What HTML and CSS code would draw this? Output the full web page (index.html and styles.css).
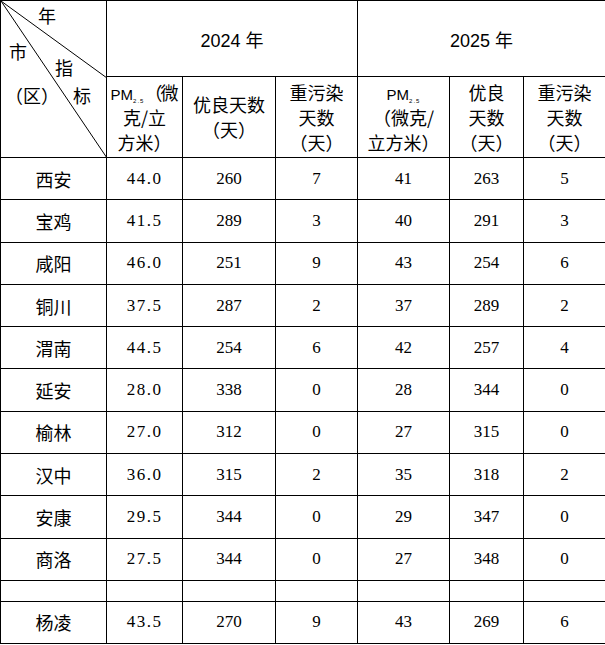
FILE: index.html
```html
<!DOCTYPE html>
<html lang="zh-CN">
<head>
<meta charset="utf-8">
<link rel="stylesheet" href="styles.css">
</head>
<body>
<table class="aq">
  <colgroup>
    <col class="c0"><col class="c1"><col class="c2"><col class="c3"><col class="c4"><col class="c5"><col class="c6">
  </colgroup>
  <thead>
    <tr class="h1">
      <td class="diag" rowspan="2">
        <svg class="diag-lines" width="106" height="157" viewBox="0 0 106 157">
          <line x1="0" y1="0" x2="106" y2="77" stroke="#000" stroke-width="1"/>
          <line x1="0" y1="0" x2="106" y2="157" stroke="#000" stroke-width="1"/>
        </svg>
        <span class="lbl l-year">年</span>
        <span class="lbl l-city">市</span>
        <span class="lbl l-zhi">指</span>
        <span class="lbl l-qu">（区）</span>
        <span class="lbl l-biao">标</span>
      </td>
      <th colspan="3" class="year">2024 年</th>
      <th colspan="3" class="year">2025 年</th>
    </tr>
    <tr class="h2">
      <th class="sub pmh"><span class="pmt">PM</span><span class="sb">2.5</span><span class="par">（</span>微<br>克/立<br>方米）</th>
      <th class="sub">优良天数<br>（天）</th>
      <th class="sub">重污染<br>天数<br>（天）</th>
      <th class="sub"><span class="pmt">PM</span><span class="sb">2.5</span><br>（微克/<br>立方米）</th>
      <th class="sub">优良<br>天数<br>（天）</th>
      <th class="sub">重污染<br>天数<br>（天）</th>
    </tr>
  </thead>
  <tbody>
    <tr class="row"><td class="city">西安</td><td class="pm">44.0</td><td>260</td><td>7</td><td>41</td><td>263</td><td>5</td></tr>
    <tr class="row"><td class="city">宝鸡</td><td class="pm">41.5</td><td>289</td><td>3</td><td>40</td><td>291</td><td>3</td></tr>
    <tr class="row"><td class="city">咸阳</td><td class="pm">46.0</td><td>251</td><td>9</td><td>43</td><td>254</td><td>6</td></tr>
    <tr class="row"><td class="city">铜川</td><td class="pm">37.5</td><td>287</td><td>2</td><td>37</td><td>289</td><td>2</td></tr>
    <tr class="row"><td class="city">渭南</td><td class="pm">44.5</td><td>254</td><td>6</td><td>42</td><td>257</td><td>4</td></tr>
    <tr class="row"><td class="city">延安</td><td class="pm">28.0</td><td>338</td><td>0</td><td>28</td><td>344</td><td>0</td></tr>
    <tr class="row"><td class="city">榆林</td><td class="pm">27.0</td><td>312</td><td>0</td><td>27</td><td>315</td><td>0</td></tr>
    <tr class="row"><td class="city">汉中</td><td class="pm">36.0</td><td>315</td><td>2</td><td>35</td><td>318</td><td>2</td></tr>
    <tr class="row"><td class="city">安康</td><td class="pm">29.5</td><td>344</td><td>0</td><td>29</td><td>347</td><td>0</td></tr>
    <tr class="row"><td class="city">商洛</td><td class="pm">27.5</td><td>344</td><td>0</td><td>27</td><td>348</td><td>0</td></tr>
    <tr class="blank"><td></td><td></td><td></td><td></td><td></td><td></td><td></td></tr>
    <tr class="row last"><td class="city">杨凌</td><td class="pm">43.5</td><td>270</td><td>9</td><td>43</td><td>269</td><td>6</td></tr>
  </tbody>
</table>
</body>
</html>
```

FILE: styles.css
```css
html, body {
  margin: 0;
  padding: 0;
  background: #fff;
}

.aq {
  border-collapse: collapse;
  table-layout: fixed;
  width: 605px;
  color: #000;
  font-family: "Liberation Serif", "Noto Sans CJK SC", serif;
  font-size: 17px;
}

.c0 { width: 106px; }
.c1 { width: 76px; }
.c2 { width: 93px; }
.c3 { width: 82px; }
.c4 { width: 92px; }
.c5 { width: 74px; }
.c6 { width: 82px; }

.aq td,
.aq th {
  border: 1px solid #000;
  padding: 0;
  text-align: center;
  vertical-align: middle;
  font-weight: normal;
}

.h1 { height: 76px; }
.h2 { height: 81px; }
.row { height: 42.3px; }
.blank { height: 21px; }
.last { height: 42px; }

.year {
  font-family: "Liberation Sans", "Noto Sans CJK SC", sans-serif;
  font-size: 18px;
}

.sub {
  font-family: "Noto Sans CJK SC", sans-serif;
  font-size: 18px;
  line-height: 25px;
  white-space: nowrap;
}

.pmt {
  font-family: "Liberation Sans", sans-serif;
  font-size: 15px;
  line-height: 0;
}

.sb {
  font-family: "Liberation Sans", sans-serif;
  font-size: 6px;
  letter-spacing: 1px;
  vertical-align: -3px;
  line-height: 0;
}

.pmh {
  text-align: left;
  padding-left: 6px;
}

.par {
  letter-spacing: -2px;
}

.city {
  font-family: "Noto Sans CJK SC", sans-serif;
  font-size: 18px;
}

.pm {
  letter-spacing: 1.5px;
}

.diag {
  position: relative;
  overflow: hidden;
}

.diag-lines {
  position: absolute;
  left: 0;
  top: 0;
  display: block;
}

.lbl {
  position: absolute;
  font-family: "Noto Sans CJK SC", sans-serif;
  font-size: 18px;
  line-height: 18px;
  white-space: nowrap;
}

.l-year { left: 37px; top: 5px; }
.l-city { left: 8px; top: 41px; }
.l-zhi { left: 54px; top: 57px; }
.l-qu { left: 4px; top: 85px; }
.l-biao { left: 72px; top: 85px; }
```
